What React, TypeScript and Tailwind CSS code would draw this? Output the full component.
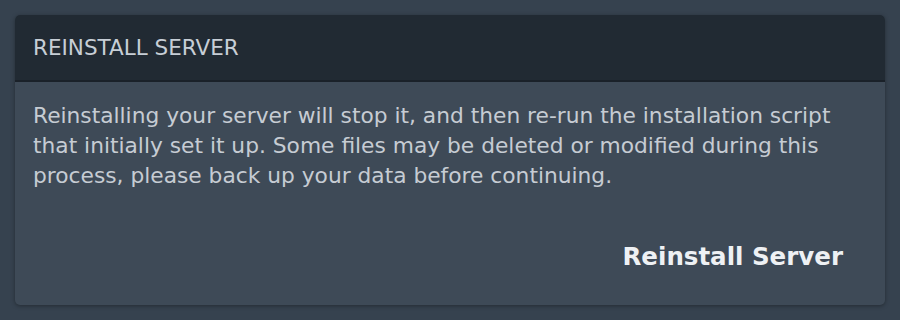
import React from "react";

export default function App() {
  return (
    <div
      className="w-[900px] h-[320px] bg-[#36424f] pt-[15px] px-[15px]"
      style={{ fontFamily: '"DejaVu Sans", sans-serif' }}
    >
      <div className="w-[870px] h-[290px] rounded-[5px] bg-[#3e4a57] shadow-[0_1px_4px_rgba(0,0,0,0.35)] overflow-hidden flex flex-col">
        <div className="h-[67px] bg-[#212a33] border-b-2 border-[#1a2129] flex items-center px-[18px]">
          <span className="text-[21.5px] text-[#c7ced6] pt-[1px]">REINSTALL SERVER</span>
        </div>
        <div className="flex-1 flex flex-col px-[18px] pt-[19px]">
          <p className="text-[21.75px] leading-[30px] text-[#c6ccd3] w-[830px]">
            Reinstalling your server will stop it, and then re-run the installation script that initially set it up. Some files may be deleted or modified during this process, please back up your data before continuing.
          </p>
          <div className="flex justify-end mt-[48px] pr-[24px]">
            <span className="text-[24.5px] font-bold text-[#eef1f4]">Reinstall Server</span>
          </div>
        </div>
      </div>
    </div>
  );
}
